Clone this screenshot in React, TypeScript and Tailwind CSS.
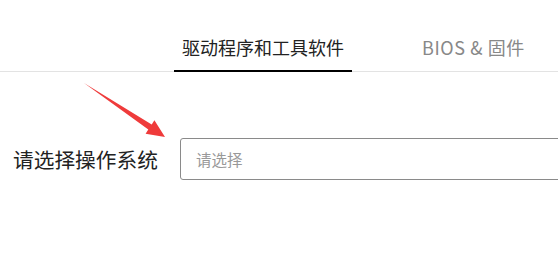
export default function App() {
  return (
    <div className="relative w-full h-[261px] overflow-hidden bg-white font-['Noto_Sans_CJK_SC','Noto_Sans',sans-serif]">
      <div className="flex border-b border-[#e3e3e3] pl-[174px]">
        <div className="-mb-px border-b-2 border-black px-2 pt-[35px] pb-[10px] text-[18px] leading-[24px] text-[#222]">
          驱动程序和工具软件
        </div>
        <div className="ml-[62px] px-2 pt-[35px] pb-[12px] text-[18px] leading-[24px] tracking-[0.6px] text-[#888]">
          BIOS &amp; 固件
        </div>
      </div>

      <div className="mt-[66px] flex items-center">
        <label className="w-[180px] shrink-0 pl-[13px] text-[20.7px] leading-[26px] text-[#222]">
          请选择操作系统
        </label>
        <input
          type="text"
          placeholder="请选择"
          className="h-[42px] w-[420px] shrink-0 rounded-[3px] border border-[#8a8a8a] px-[15px] text-[15.5px] outline-none placeholder:text-[#999]"
        />
      </div>

      <svg className="absolute left-0 top-0" width="558" height="261" viewBox="0 0 558 261">
        <polygon
          points="84,83 151.7,124.5 154.4,120.3 165,137 145.6,133.7 148.3,129.5"
          fill="#ef3b3b"
        />
      </svg>
    </div>
  )
}
